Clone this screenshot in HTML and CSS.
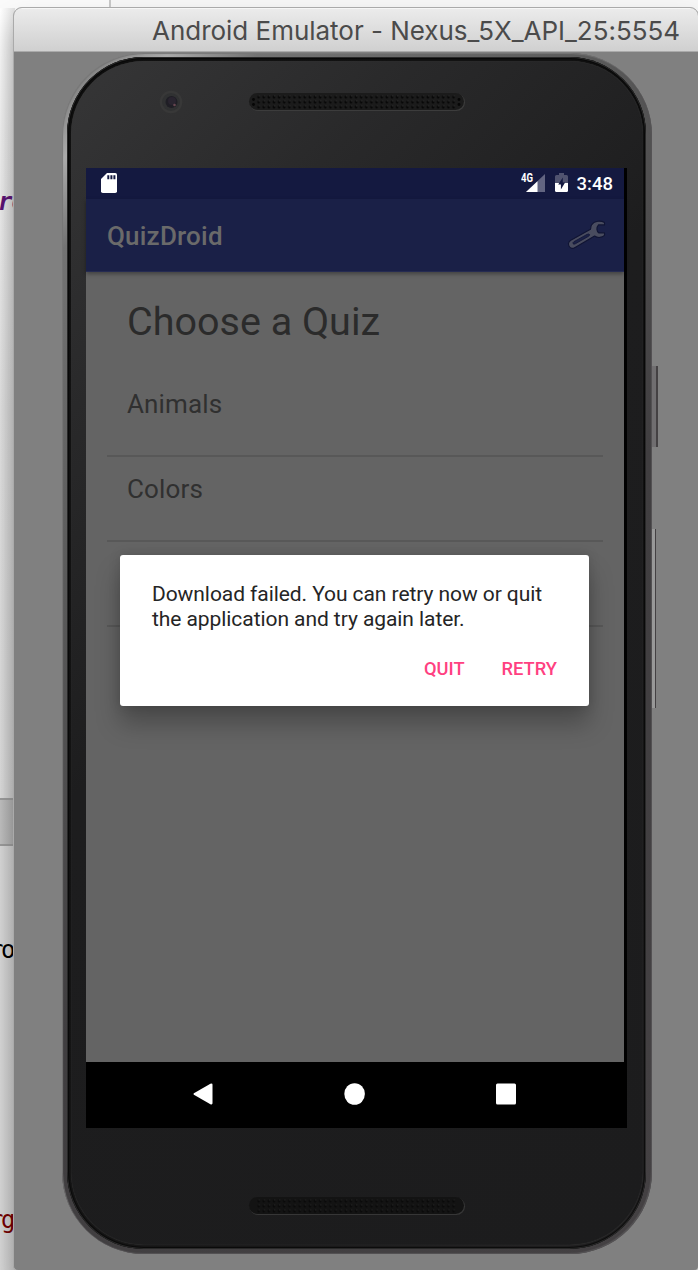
FILE: index.html
```html
<!DOCTYPE html>
<html lang="en">
<head>
<meta charset="utf-8">
<title>Android Emulator</title>
<link rel="stylesheet" href="styles.css">
</head>
<body>
<div class="desktop">
  <div class="editor">
    <div class="editor-top"></div>
    <div class="pane pane-first"><span class="code purple">r<i>o</i></span></div>
    <div class="toolbar"></div>
    <div class="pane pane-second"><span class="code plain">ro</span><span class="code red">rg</span></div>
  </div>
  <div class="window">
    <header class="titlebar"><span class="window-title">Android Emulator - Nexus_5X_API_25:5554</span></header>
    <div class="stage">
      <div class="side-key power"></div>
      <div class="side-key volume"></div>
      <div class="phone">
        <div class="bezel"><div class="glass">
          <div class="forehead">
            <svg class="camera" width="24" height="24" viewBox="0 0 24 24"><circle cx="12" cy="12" r="11.3" fill="#383838"/><circle cx="12" cy="12" r="9" fill="#303132"/><circle cx="12.5" cy="12" r="6" fill="#1f1e25"/><circle cx="13" cy="11" r="4" fill="#29242f"/><circle cx="15.5" cy="15" r="1.3" fill="#674650"/></svg>
            <svg class="speaker" width="218" height="20" viewBox="0 0 218 20"><defs><pattern id="holes" x="8" y="2.5" width="5.13" height="5" patternUnits="userSpaceOnUse"><circle cx="2.6" cy="2.6" r="1.35" fill="#060606"/><circle cx="3.3" cy="1.5" r=".55" fill="#3b3b3b"/></pattern></defs><rect x="1.5" y="1.5" width="215.5" height="17.5" rx="8.7" fill="#3c3c3c"/><rect x="1" y="1" width="215" height="17" rx="8.5" fill="#1b1b1b"/><rect x="8" y="2.5" width="200" height="15" fill="url(#holes)"/><g fill="#060606"><circle cx="5.5" cy="7.5" r="1.4"/><circle cx="5.5" cy="12.5" r="1.4"/><circle cx="211" cy="7.5" r="1.4"/><circle cx="211" cy="12.5" r="1.4"/></g></svg>
          </div>
          <div class="screen">
            <div class="app">
              <div class="status">
                <svg class="sd" width="16" height="20" viewBox="0 0 16 20"><path fill="#fff" d="M6 0h8.2Q16 0 16 1.8v16.4Q16 20 14.2 20H1.8Q0 20 0 18.2V6Z"/><path fill="#141940" d="M6.3 2.3h2v4h-2zm3.1 0h2v4h-2zm3 0h2v4h-2z"/></svg>
                <div class="status-right">
                  <svg class="signal" width="24" height="20" viewBox="0 0 24 20"><path fill="#626581" d="M24 1v18H5Z"/><path fill="#fff" d="M16.5 8.2V19H5Z"/><text class="net" x="0" y="9.3" textLength="12" lengthAdjust="spacingAndGlyphs">4G</text></svg>
                  <svg class="battery" width="13" height="20" viewBox="0 0 13 20"><path fill="#50536f" d="M4 0h5v2h2.5Q13 2 13 3.5V10H0V3.5Q0 2 1.5 2H4Z"/><path fill="#fff" d="M0 10h13v7.5q0 1.5-1.5 1.5h-10Q0 19 0 17.5Z"/><path fill="#141940" d="M7.8 4.5 3.2 11.6h2.7v5l4.2-7H7.8Z"/></svg>
                  <span class="time">3:48</span>
                </div>
              </div>
              <div class="appbar">
                <span class="app-name">QuizDroid</span>
                <svg class="wrench" width="40" height="30" viewBox="0 0 40 30"><path fill="#494c5f" stroke="#101433" stroke-width="1.1" stroke-linejoin="round" d="M37.5 2.5C34 .5 27.5.3 24.5 5c-.8 1.5-.6 3.3-1 4.3L3.8 20.2C1 22 1 24.8 2.4 26.8c1.3 1.8 3.8 1.7 5.7.6L27.6 16c3.1 2.2 7.5 1.8 9.9-.7v-2.6l-5.6.2c-2.4-1.4-2.7-5.3-.4-8h6Z"/><path fill="#1b2148" stroke="#101433" stroke-width=".8" d="M6.9 21.7 20 14.4q2.1-.9 2.6.2.2.9-1.1 1.7L8.3 23.8q-1.6.8-2.2-.1-.6-1.2.8-2Z"/></svg>
              </div>
              <div class="content">
                <h1 class="heading">Choose a Quiz</h1>
                <div class="row">Animals</div>
                <div class="row">Colors</div>
                <div class="row"></div>
              </div>
              <div class="dialog">
                <p class="message">Download failed. You can retry now or quit<br>the application and try again later.</p>
                <div class="actions"><span>QUIT</span><span>RETRY</span></div>
              </div>
            </div>
            <div class="nav">
              <svg width="20" height="22" viewBox="0 0 20 22"><path fill="#fff" d="M17.4.8Q19.5 0 19.5 1.7v18.6q0 1.7-2.1.9L.9 11.8Q0 11 .9 10.2Z"/></svg>
              <svg width="22" height="22" viewBox="0 0 22 22"><ellipse cx="10.6" cy="11" rx="10.3" ry="10.8" fill="#fff"/></svg>
              <svg width="20" height="22" viewBox="0 0 20 22"><rect width="20" height="21" y=".5" rx="1.5" fill="#fff"/></svg>
            </div>
          </div>
          <div class="chin">
            <svg class="speaker" width="218" height="20" viewBox="0 0 218 20"><rect x="1.5" y="1.5" width="215.5" height="17.5" rx="8.7" fill="#363636"/><rect x="1" y="1" width="215" height="17" rx="8.5" fill="#131313"/><g opacity=".75"><rect x="8" y="2.5" width="200" height="15" fill="url(#holes)"/></g></svg>
          </div>
        </div></div>
      </div>
    </div>
  </div>
</div>
</body>
</html>
```
FILE: styles.css
```css
* { box-sizing: border-box; }
body { margin: 0; font-family: Roboto, sans-serif; }
svg { display: block; flex: none; }
.desktop { position: relative; width: 698px; height: 1270px; overflow: hidden; background: #f6f6f6; }
.editor { display: flex; flex-direction: column; height: 1270px; }
.editor-top { width: 111px; height: 8px; border-right: 2px solid #c8c8c8; background: #fafafa; }
.pane { width: 15px; overflow: hidden; background: linear-gradient(90deg, #dadada, #c8c8c8); }
.pane-first { height: 790px; padding-top: 179px; background: linear-gradient(90deg, rgba(0,0,0,0), rgba(0,0,0,.12)), linear-gradient(#fff, #f4f4f4 120px, #e4e4e4 400px, #dedede); }
.toolbar { width: 14px; height: 48px; border: solid #9c9c9c; border-width: 2px 0; background: linear-gradient(90deg, #c2c2c2, #acacac); }
.pane-second { height: 424px; padding-top: 89px; display: flex; flex-direction: column; gap: 240px; }
.code { display: block; height: 30px; margin-left: -11px; font: 24px/30px "DejaVu Sans Mono", monospace; letter-spacing: -2.5px; white-space: nowrap; }
.purple { margin-left: -2px; color: #5c1475; font-weight: bold; font-style: italic; letter-spacing: -1px; }
.plain { color: #000; }
.red { color: #750000; }
.window { position: absolute; left: 13px; top: 7px; width: 686px; height: 1264px; border: 1px solid #aaa; border-radius: 9px 9px 5px 5px; overflow: hidden; background: #808080; box-shadow: 0 18px 28px rgba(0,0,0,.25); }
.titlebar { height: 44px; padding-left: 138px; border-top: 1px solid #f6f6f6; border-bottom: 1px solid #aaa; background: linear-gradient(#ebebeb, #d0d0d0); }
.window-title { display: block; font: 26px/43px Inter, sans-serif; color: #4b4b4b; letter-spacing: -.02px; white-space: nowrap; }
.stage { position: relative; padding: 1px 0 0 48px; }
.side-key { position: absolute; border-right: 2px solid #444143; background: #706e70; }
.power { left: 637px; top: 314px; width: 7px; height: 81px; }
.volume { left: 637px; top: 477px; width: 5px; height: 179px; background: #989898; border-right-width: 1px; }
.phone { position: relative; width: 590px; height: 1201px; padding: 4px 6px 5px 5px; border-radius: 82px; background: linear-gradient(135deg, #686868, #aaa 6%, #737373 11%, #5a5a5a 30%, #403e40 55%, #444143); box-shadow: inset -1px -1px 1px #565456, inset 1px 1px 1px #777; }
.bezel { height: 1192px; padding: 4px 3px 4px 4px; border-radius: 77px; background: linear-gradient(135deg, #111, #171717 60%, #292829); box-shadow: inset 0 0 0 1px #292929, inset 0 0 2px 2px #050505; }
.glass { height: 1184px; padding-left: 15px; border-radius: 73px; background: linear-gradient(135deg, #363637, #29292a 20%, #1d1d1e 42%, #1c1c1d); box-shadow: inset 0 0 1px #424242; }
.forehead { display: flex; height: 107px; padding: 29px 0 0 73px; }
.speaker { margin: 2px 0 0 65px; }
.screen { width: 541px; height: 960px; background: #000; }
.app { position: relative; width: 538px; height: 894px; background: #646464; }
.status { display: flex; justify-content: space-between; height: 31px; padding: 5px 11px 0 15px; background: #141940; }
.status-right { display: flex; }
.net { font: bold 12px Roboto, sans-serif; fill: #fff; }
.battery { margin-left: 10px; }
.time { margin-left: 9px; font-size: 18.5px; line-height: 23px; font-weight: 500; color: #fff; }
.appbar { display: flex; justify-content: space-between; height: 73px; padding: 21px 17px 0 21px; background: #1a2047; border-bottom: 1px solid #252b52; box-shadow: 0 2px 4px rgba(0,0,0,.35); position: relative; }
.app-name { font-size: 26px; line-height: 33px; font-weight: 500; letter-spacing: .2px; color: #6a6a6a; }
.content { padding: 22px 21px 0; }
.heading { height: 78px; margin: 0; padding-left: 20px; font-size: 39.5px; line-height: 56px; font-weight: 400; color: #2b2b2b; }
.row { height: 85px; padding: 14px 0 0 20px; border-bottom: 2px solid #585858; font-size: 26px; line-height: 36px; letter-spacing: .15px; color: #303030; }
.dialog { position: absolute; left: 34px; top: 387px; width: 469px; height: 151px; padding: 27px 31px 0 32px; border-radius: 3px; background: #fff; box-shadow: 0 18px 24px rgba(0,0,0,.26), 0 0 12px rgba(0,0,0,.15); }
.message { margin: 0; font-size: 21px; line-height: 24.6px; letter-spacing: -.07px; color: #252525; white-space: nowrap; }
.actions { display: flex; justify-content: flex-end; gap: 37px; padding: 26px 1px 0 0; font-size: 18.3px; line-height: 24px; font-weight: 500; color: #ff4081; }
.nav { display: flex; justify-content: space-between; height: 66px; padding: 21px 111px 0 107px; }
.chin { padding: 68px 0 0 162px; }
.chin .speaker { margin: 0; }
```
